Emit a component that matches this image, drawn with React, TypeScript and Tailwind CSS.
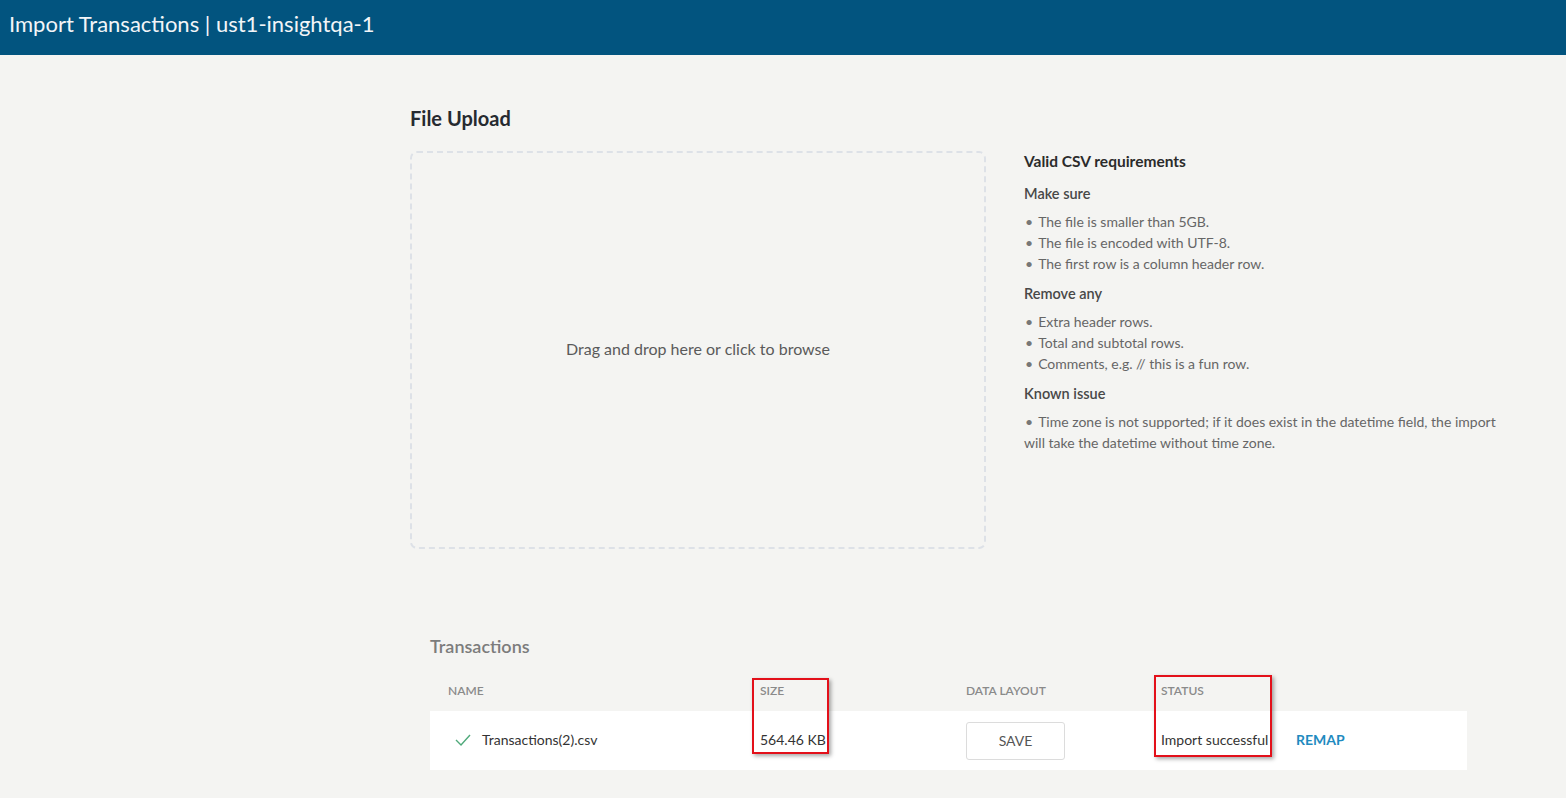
import React from 'react'

function Check() {
  return (
    <svg width="16" height="12" viewBox="0 0 16 12" fill="none">
      <polyline points="1,6 6,11 15,1" stroke="#4fa97a" strokeWidth="1.4" fill="none" />
    </svg>
  )
}

const makeSure = [
  'The file is smaller than 5GB.',
  'The file is encoded with UTF-8.',
  'The first row is a column header row.',
]

const removeAny = ['Extra header rows.', 'Total and subtotal rows.', 'Comments, e.g. // this is a fun row.']

function Bullet({ text }: { text: string }) {
  return (
    <p className="text-[14px] leading-[21px] text-[#666]">
      <span className="pl-[1px] pr-[5px] text-[#777]">•</span>
      {text}
    </p>
  )
}

export default function App() {
  return (
    <div className="min-h-screen bg-[#f4f4f2] font-['Lato',sans-serif]">
      <header className="h-[55px] bg-[#02547f] px-[9px] pt-[9px]">
        <h1 className="text-[22px] leading-[30px] text-[#f2f5f8]">Import Transactions | ust1-insightqa-1</h1>
      </header>

      <main className="pl-[410px] pt-[49px]">
        <h2 className="text-[20px] leading-[28px] font-bold text-[#262a30]">File Upload</h2>

        <div className="mt-[19px] flex">
          <div className="w-[576px] h-[398px] border-2 border-dashed border-[#dde1e7] rounded-[7px] flex items-center justify-center">
            <span className="text-[16px] text-[#5a5a5a] -mt-[2px]">Drag and drop here or click to browse</span>
          </div>

          <div className="ml-[38px] w-[480px]">
            <h3 className="text-[15.5px] leading-[20px] font-bold text-[#2b2b2b]">Valid CSV requirements</h3>
            <h4 className="mt-[13px] text-[14.5px] leading-[20px] font-semibold text-[#484848]">Make sure</h4>
            <div className="mt-[7px]">
              {makeSure.map(t => <Bullet key={t} text={t} />)}
            </div>
            <h4 className="mt-[10px] text-[14.5px] leading-[20px] font-semibold text-[#484848]">Remove any</h4>
            <div className="mt-[7px]">
              {removeAny.map(t => <Bullet key={t} text={t} />)}
            </div>
            <h4 className="mt-[10px] text-[14.5px] leading-[20px] font-semibold text-[#484848]">Known issue</h4>
            <div className="mt-[7px]">
              <Bullet text="Time zone is not supported; if it does exist in the datetime field, the import will take the datetime without time zone." />
            </div>
          </div>
        </div>

        <section className="ml-[20px] mt-[85px] w-[1037px]">
          <h2 className="text-[18px] leading-[24px] font-semibold text-[#7c7c7c]">Transactions</h2>

          <div className="relative mt-[12px]">
            <div className="h-[41px] pl-[18px] grid grid-cols-[312px_206px_195px_135px_1fr] items-center text-[12px] font-semibold uppercase text-[#8a8a8a]">
              <span>Name</span>
              <span>Size</span>
              <span>Data Layout</span>
              <span>Status</span>
              <span></span>
            </div>
            <div className="h-[59px] bg-white pl-[18px] grid grid-cols-[312px_206px_195px_135px_1fr] items-center text-[14px] text-[#333]">
              <span className="flex items-center -mt-[2px]">
                <span className="ml-[7px] mr-[11px] flex"><Check /></span>
                Transactions(2).csv
              </span>
              <span className="-mt-[2px]">564.46 KB</span>
              <span>
                <button className="w-[99px] h-[38px] border border-[#dcdcdc] rounded-[3px] bg-white text-[14px] text-[#555]">SAVE</button>
              </span>
              <span className="-mt-[2px]">Import successful</span>
              <span className="-mt-[2px] font-bold text-[#1f8bc0]">REMAP</span>
            </div>

            <div className="absolute left-[322px] top-[8px] w-[77px] h-[76px] border-2 border-[#e3101a] shadow-[2px_2px_4px_rgba(0,0,0,0.35)]"></div>
            <div className="absolute left-[724px] top-[5px] w-[118px] h-[82px] border-2 border-[#e3101a] shadow-[2px_2px_4px_rgba(0,0,0,0.35)]"></div>
          </div>
        </section>
      </main>
    </div>
  )
}
